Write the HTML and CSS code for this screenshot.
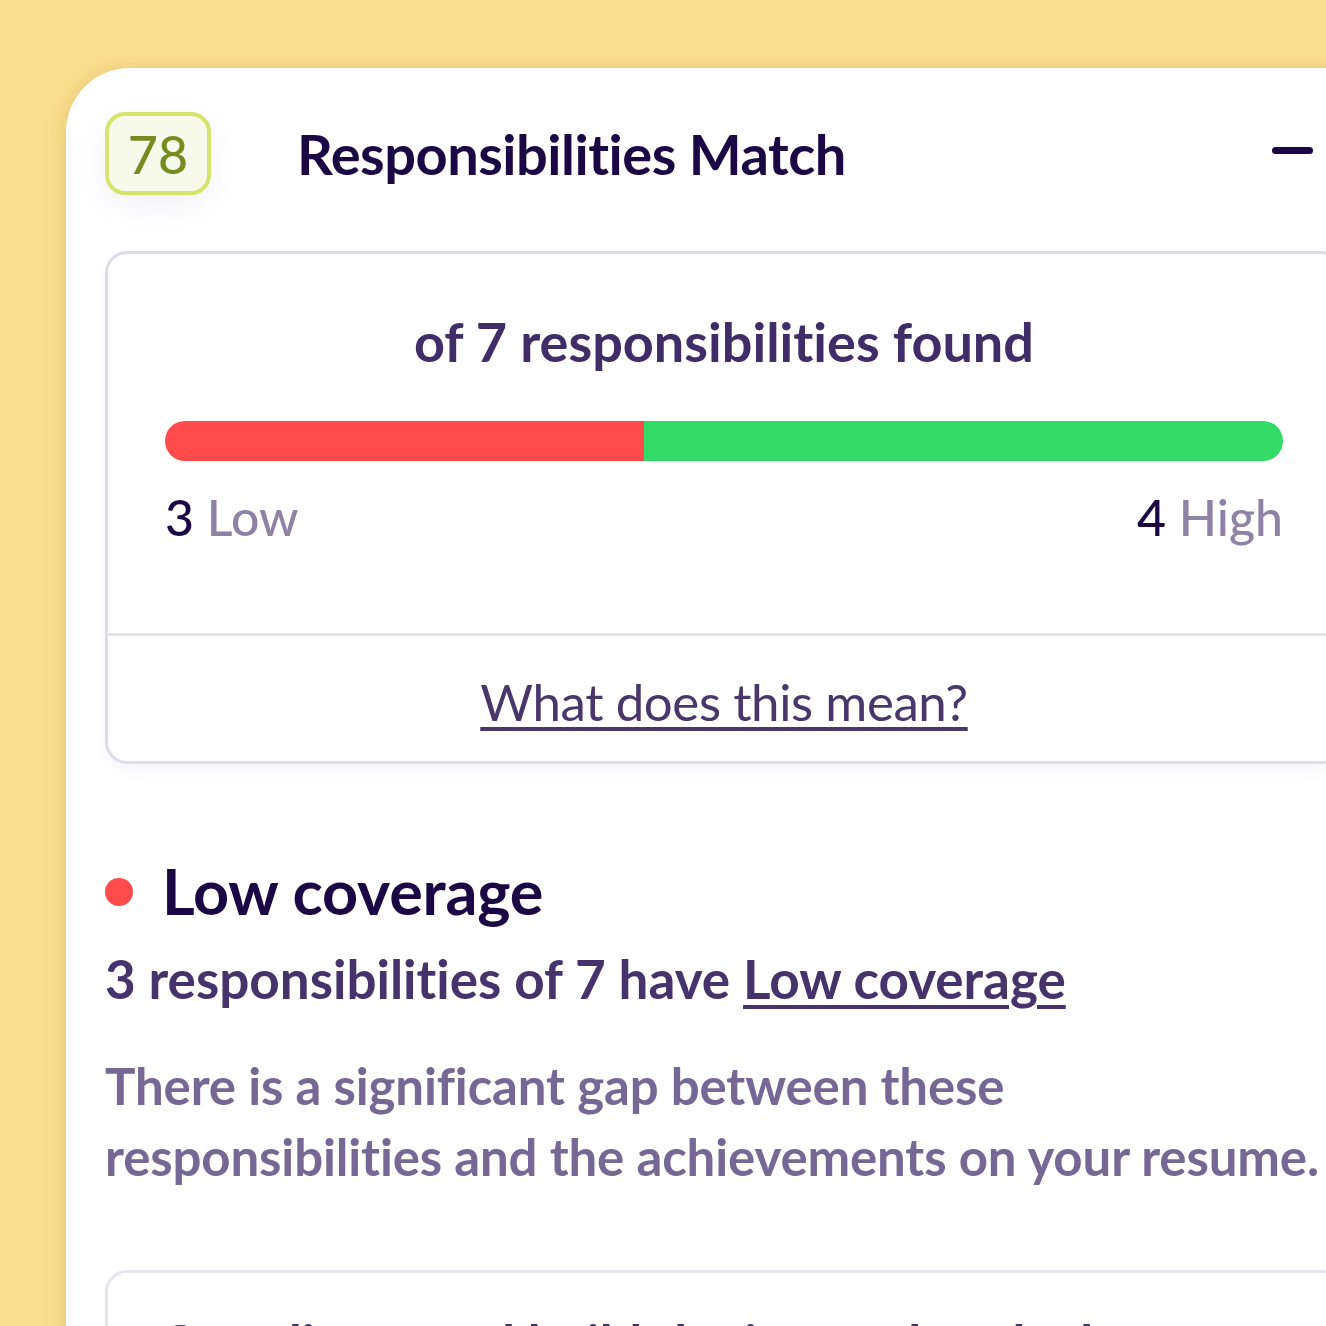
FILE: index.html
```html
<!DOCTYPE html>
<html lang="en">
<head>
<meta charset="utf-8">
<title>Responsibilities Match</title>
<link rel="stylesheet" href="styles.css">
</head>
<body>
<div class="card">
  <div class="header">
    <div class="score">78</div>
    <h1 class="title">Responsibilities Match</h1>
    <div class="collapse" aria-label="Collapse"></div>
  </div>

  <div class="stats">
    <div class="stats-main">
      <div class="stats-title">of 7 responsibilities found</div>
      <div class="bar">
        <div class="bar-low" style="width: 42.857%"></div>
        <div class="bar-high"></div>
      </div>
      <div class="legend">
        <div class="legend-item"><span class="num">3</span> <span class="word">Low</span></div>
        <div class="legend-item"><span class="num">4</span> <span class="word">High</span></div>
      </div>
    </div>
    <div class="stats-footer">
      <a class="help-link" href="#">What does this mean?</a>
    </div>
  </div>

  <div class="section">
    <div class="section-head">
      <span class="dot"></span>
      <h2 class="section-title">Low coverage</h2>
    </div>
    <div class="section-sub">3 responsibilities of 7 have <a href="#" class="sub-link">Low coverage</a></div>
    <p class="section-text">There is a significant gap between these<br>responsibilities and the achievements on your resume.</p>
  </div>

  <div class="item">
    <div class="item-text">Coordinate and build the internal tools that support the team</div>
  </div>
</div>
</body>
</html>
```

FILE: styles.css
```css
html, body {
  margin: 0;
  padding: 0;
}
body {
  background: #F8DE8F;
  font-family: "Lato", "Noto Sans", sans-serif;
  font-variant-ligatures: none;
  overflow: hidden;
  height: 1326px;
}
.card {
  margin: 68px 0 0 66px;
  width: 1316px;
  min-height: 1400px;
  box-sizing: border-box;
  background: #FFFFFF;
  border-radius: 64px 0 0 0;
  padding: 44px 39px 0 39px;
  box-shadow: -3px 0 18px rgba(170, 120, 20, 0.18);
}
.header {
  display: flex;
  align-items: center;
  height: 83px;
}
.score {
  width: 106px;
  height: 83px;
  box-sizing: border-box;
  border: 4px solid #D5E46F;
  border-radius: 20px;
  background: #F7FAEA;
  color: #788B22;
  font-size: 52px;
  font-weight: 500;
  display: flex;
  align-items: center;
  justify-content: center;
  box-shadow: 0 10px 34px rgba(90, 90, 150, 0.08);
}
.title {
  margin: 0 0 0 86px;
  font-size: 56px;
  font-weight: 700;
  color: #190844;
  line-height: 1;
  letter-spacing: -0.5px;
}
.collapse {
  margin-left: auto;
  margin-right: 30px;
  width: 41px;
  height: 7px;
  border-radius: 4px;
  background: #190844;
  position: relative;
  top: -3px;
}
.stats {
  margin-top: 56px;
  border: 3px solid #DEDCE7;
  border-radius: 22px;
  box-shadow: 0 6px 16px rgba(90, 90, 150, 0.06);
}
.stats-main {
  padding: 56px 57px 86px 57px;
}
.stats-title {
  text-align: center;
  font-size: 54px;
  line-height: 64px;
  font-weight: 700;
  color: #3F2D68;
}
.bar {
  margin-top: 47px;
  height: 40px;
  border-radius: 20px;
  overflow: hidden;
  display: flex;
}
.bar-low {
  background: #FF4B4B;
}
.bar-high {
  flex: 1;
  background: #33DA65;
}
.legend {
  margin-top: 26px;
  display: flex;
  justify-content: space-between;
  font-size: 50px;
  line-height: 60px;
}
.legend-item .num {
  color: #190844;
  font-weight: 500;
}
.legend-item .word {
  color: #8E82A6;
  font-weight: 500;
}
.stats-footer {
  border-top: 3px solid #E5E3EC;
  padding: 35px 0 28px;
  text-align: center;
  font-size: 51px;
  line-height: 62px;
}
.help-link {
  color: #47376B;
  text-decoration: underline;
  text-decoration-thickness: 4px;
  text-underline-offset: 6px;
  letter-spacing: -0.4px;
}
.section {
  margin-top: 90px;
}
.section-head {
  display: flex;
  align-items: center;
}
.dot {
  width: 28px;
  height: 28px;
  border-radius: 50%;
  background: #FF4B4B;
  margin-right: 29px;
  flex-shrink: 0;
  position: relative;
  top: 1px;
}
.section-title {
  margin: 0;
  font-size: 63px;
  line-height: 74px;
  font-weight: 700;
  color: #190844;
  letter-spacing: -0.2px;
}
.section-sub {
  margin-top: 20px;
  font-size: 53px;
  line-height: 62px;
  font-weight: 700;
  color: #45336B;
}
.sub-link {
  color: #45336B;
  text-decoration: underline;
  text-decoration-thickness: 4px;
  text-underline-offset: 6px;
}
.section-text {
  margin: 40px 0 0 0;
  font-size: 51px;
  line-height: 71px;
  font-weight: 700;
  color: #766895;
  white-space: nowrap;
  letter-spacing: -0.15px;
}
.item {
  margin-top: 78px;
  border: 3px solid #E6E5ED;
  border-radius: 22px;
  padding: 38px 52px;
}
.item-text {
  font-size: 52px;
  line-height: 62px;
  font-weight: 700;
  color: #45336B;
  white-space: nowrap;
}
```
